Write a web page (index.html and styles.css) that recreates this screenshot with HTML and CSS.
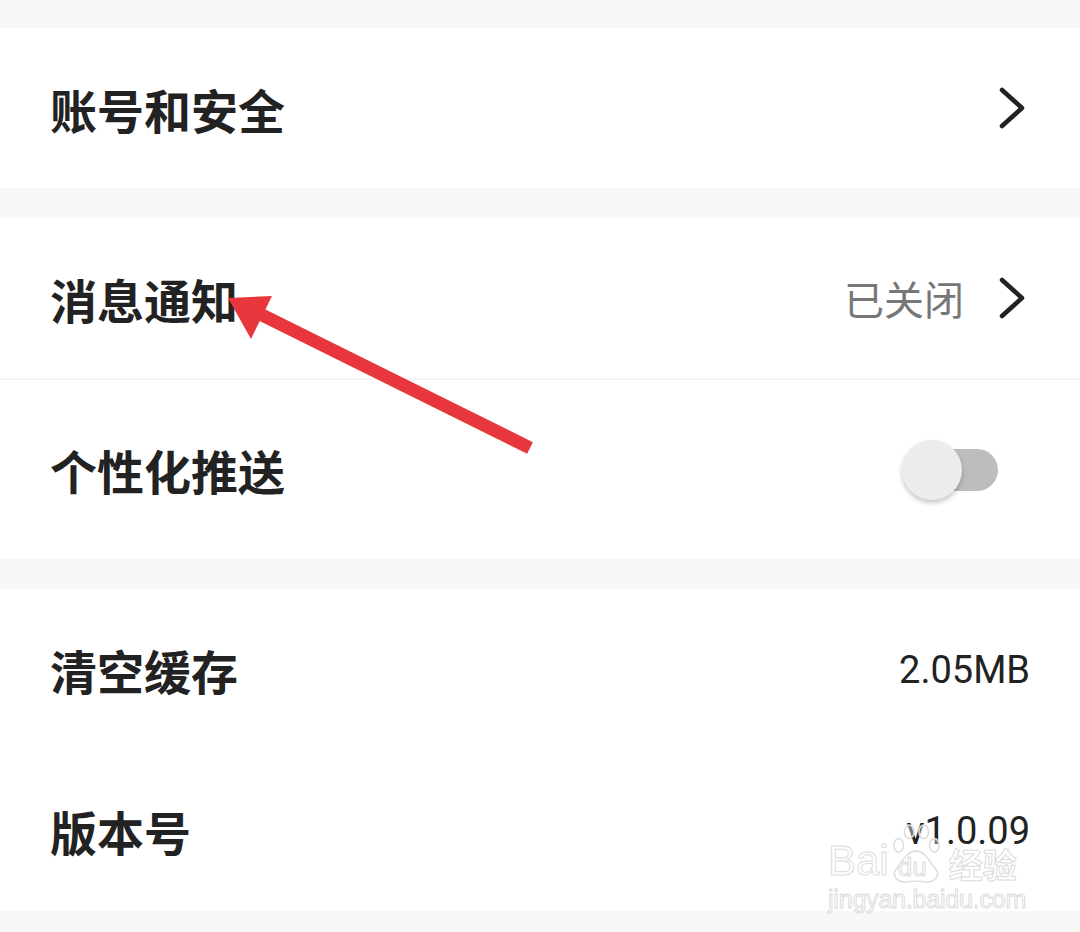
FILE: index.html
```html
<!DOCTYPE html>
<html lang="zh-CN">
<head>
	<meta charset="UTF-8">
	<title>设置</title>
	<link rel="stylesheet" href="styles.css">
</head>
<body>
	<div class="page">
		<div class="gap gap-top"></div>
		<div class="group">
			<div class="row">
				<span class="label">账号和安全</span>
				<svg class="chevron" viewBox="0 0 28 44"><polyline points="4,4 24,22 4,40"/></svg>
			</div>
		</div>
		<div class="gap"></div>
		<div class="group">
			<div class="row">
				<span class="label">消息通知</span>
				<span class="status">已关闭</span>
				<svg class="chevron" viewBox="0 0 28 44"><polyline points="4,4 24,22 4,40"/></svg>
			</div>
			<div class="divider"></div>
			<div class="row row-tall">
				<span class="label">个性化推送</span>
				<div class="switch">
					<div class="track"></div>
					<div class="knob"></div>
				</div>
			</div>
		</div>
		<div class="gap"></div>
		<div class="group">
			<div class="row row-161">
				<span class="label">清空缓存</span>
				<span class="value">2.05MB</span>
			</div>
			<div class="row row-161">
				<span class="label">版本号</span>
				<span class="value">v1.0.09</span>
			</div>
		</div>
		<div class="gap gap-bottom"></div>

		<!-- annotation arrow -->
		<svg class="arrow" viewBox="0 0 1080 932">
			<line x1="530" y1="448" x2="256" y2="312"/>
			<polygon points="228,298 272,296 251,339"/>
		</svg>

		<!-- watermark -->
		<div class="watermark">
			<div class="wm-top">
				<span class="wm-bai">Bai</span>
				<span class="wm-paw">
					<svg viewBox="0 0 56 64">
						<ellipse cx="10" cy="24" rx="5" ry="7"/>
						<ellipse cx="21" cy="10" rx="5" ry="7"/>
						<ellipse cx="36" cy="10" rx="5" ry="7"/>
						<ellipse cx="47" cy="24" rx="5" ry="7"/>
						<path d="M28 30 C18 30 14 42 8 48 C2 54 8 63 18 62 C24 61 32 61 38 62 C48 63 54 54 48 48 C42 42 38 30 28 30 Z"/>
					</svg>
					<span class="wm-du">du</span>
				</span>
				<span class="wm-jy">经验</span>
			</div>
			<div class="wm-url">jingyan.baidu.com</div>
		</div>
	</div>
</body>
</html>
```

FILE: styles.css
```css
*{margin: 0; padding: 0; box-sizing: border-box;}
body{
	background: #f8f8f8;
	font-family: "Noto Sans CJK SC", "Noto Sans", sans-serif;
	color: #222;
}
.page{
	position: relative;
	width: 1080px;
	height: 932px;
	overflow: hidden;
}
.gap{height: 30px;}
.gap-top{height: 28px;}
.gap-bottom{height: 20px;}
.group{background: #fff;}
.row{
	height: 160px;
	display: flex;
	align-items: center;
	padding: 0 50px;
}
.row-tall{height: 179px;}
.row-161{height: 161px;}
.divider{
	height: 2px;
	background: #f5f5f5;
}
.label{
	font-size: 47px;
	font-weight: 700;
	flex: 1;
}
.status{
	font-size: 40px;
	color: #777;
	margin-right: 34px;
}
.chevron{
	width: 28px;
	height: 44px;
	margin-right: 4px;
}
.chevron polyline{
	fill: none;
	stroke: #222;
	stroke-width: 4.5;
	stroke-linecap: round;
	stroke-linejoin: round;
}
.value{
	font-family: Roboto, "Liberation Sans", sans-serif;
	font-size: 38px;
	line-height: 1;
	color: #222;
}
.switch{
	position: relative;
	width: 96px;
	height: 60px;
	margin-right: 32px;
}
.track{
	position: absolute;
	right: 0;
	top: 9px;
	width: 88px;
	height: 42px;
	border-radius: 21px;
	background: #bdbdbd;
}
.knob{
	position: absolute;
	left: 0;
	top: 0;
	width: 60px;
	height: 60px;
	border-radius: 50%;
	background: #ececec;
	box-shadow: 0 3px 5px rgba(0,0,0,.22);
}
.arrow{
	position: absolute;
	left: 0;
	top: 0;
	width: 1080px;
	height: 932px;
	pointer-events: none;
}
.arrow line{
	stroke: #e8373c;
	stroke-width: 13;
}
.arrow polygon{fill: #e8373c;}
.watermark{
	position: absolute;
	left: 828px;
	top: 806px;
	width: 200px;
	color: rgba(255,255,255,.55);
	-webkit-text-stroke: 1px #dcdcdc;
	font-family: "Liberation Sans", Arial, sans-serif;
	pointer-events: none;
}
.wm-top{
	display: flex;
	align-items: flex-end;
	height: 78px;
}
.wm-bai{
	font-size: 42px;
	line-height: 42px;
	margin-bottom: 2px;
}
.wm-paw{
	position: relative;
	width: 54px;
	height: 62px;
}
.wm-paw svg{
	width: 54px;
	height: 62px;
}
.wm-paw ellipse, .wm-paw path{
	fill: rgba(255,255,255,.4);
	stroke: #dcdcdc;
	stroke-width: 1.5;
}
.wm-du{
	position: absolute;
	left: 9px;
	bottom: 4px;
	font-size: 26px;
	line-height: 26px;
}
.wm-jy{
	font-family: "Noto Sans CJK SC", sans-serif;
	font-size: 34px;
	line-height: 40px;
	font-weight: 700;
	margin-left: 6px;
}
.wm-url{
	font-size: 25px;
	line-height: 30px;
	letter-spacing: -.2px;
}
```
